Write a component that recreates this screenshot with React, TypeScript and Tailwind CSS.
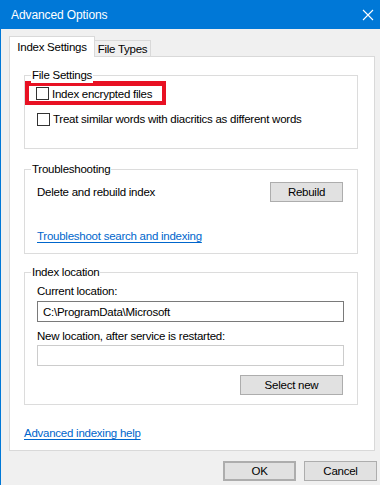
import type { ReactNode } from "react";

const FONT = { fontFamily: '"Segoe UI", "Liberation Sans", Arial, sans-serif' };

export default function App() {
  return (
    <div
      className="w-[380px] h-[485px] bg-[#f0f0f0] border-l border-[#0078d7] text-[11.5px] tracking-[-0.25px] leading-[16px] text-black overflow-hidden whitespace-nowrap"
      style={FONT}
    >
      {/* title bar */}
      <div className="h-[29px] bg-[#0078d7] flex items-center pl-[10px] pr-[6px] text-white">
        <span className="text-[12px] tracking-[-0.1px]">Advanced Options</span>
        <svg className="ml-auto" width="12" height="12" viewBox="0 0 12 12">
          <path d="M1 1 L11 11 M11 1 L1 11" stroke="white" strokeWidth="1.1" />
        </svg>
      </div>

      <div className="pl-[8px] pt-[7px]">
        {/* tabs */}
        <div className="flex items-end h-[20px] relative z-10">
          <div className="h-[21px] w-[86px] bg-white border border-b-0 border-[#d9d9d9] flex items-center justify-center -mb-[1px]">
            Index Settings
          </div>
          <div className="h-[16px] w-[56px] bg-[#f0f0f0] border border-l-0 border-b-0 border-[#d9d9d9] flex items-center justify-center">
            File Types
          </div>
        </div>

        {/* panel */}
        <div className="w-[366px] h-[395px] bg-white border border-[#d9d9d9] px-[14px] pt-[18px]">
          <Group label="File Settings" className="h-[74px]">
            <div className="mt-[5px] w-[141px] h-[24px] border-[4px] border-t-[5px] border-[#e81123] flex items-center pl-[7px] gap-[3px]">
              <Checkbox />
              <span>Index encrypted files</span>
            </div>
            <div className="mt-[6px] flex items-center pl-[12px] gap-[3px]">
              <Checkbox />
              <span>Treat similar words with diacritics as different words</span>
            </div>
          </Group>

          <Group label="Troubleshooting" className="h-[85px] mt-[20px] pl-[12px] pr-[14px] pt-[12px]">
            <div className="flex items-center justify-between">
              <span>Delete and rebuild index</span>
              <Button className="w-[73px]">Rebuild</Button>
            </div>
            <a className="block mt-[26px] text-[#0066cc] underline underline-offset-[2px] w-fit">
              Troubleshoot search and indexing
            </a>
          </Group>

          <Group label="Index location" className="h-[133px] mt-[18px] pl-[12px] pr-[13px] pt-[10px]">
            <div>Current location:</div>
            <div className="mt-[2px] h-[21px] w-[307px] border border-[#7a7a7a] flex items-center pl-[5px]">
              C:\ProgramData\Microsoft
            </div>
            <div className="mt-[6px]">New location, after service is restarted:</div>
            <div className="mt-[1px] h-[21px] w-[307px] border border-[#cccccc]" />
            <div className="mt-[9px] flex justify-end pr-[1px]">
              <Button className="w-[103px]">Select new</Button>
            </div>
          </Group>

          <a className="block mt-[20px] text-[#0066cc] underline underline-offset-[2px] w-fit">
            Advanced indexing help
          </a>
        </div>

        {/* dialog buttons */}
        <div className="flex justify-end gap-[8px] pr-[3px] mt-[10px]">
          <Button className="w-[73px] border-2 border-[#0078d7]">OK</Button>
          <Button className="w-[73px]">Cancel</Button>
        </div>
      </div>
    </div>
  );
}

function Group({ label, className, children }: { label: string; className?: string; children: ReactNode }) {
  return (
    <div className={`relative w-[334px] border border-[#dcdcdc] ${className ?? ""}`}>
      <span className="absolute -top-[9px] left-[6px] px-[1px] bg-white leading-[16px]">{label}</span>
      {children}
    </div>
  );
}

function Checkbox() {
  return <span className="inline-block w-[13px] h-[13px] border border-[#333333] bg-white shrink-0" />;
}

function Button({ className, children }: { className?: string; children: ReactNode }) {
  return (
    <div
      className={`h-[20px] bg-[#e1e1e1] border border-[#adadad] flex items-center justify-center ${className ?? ""}`}
    >
      {children}
    </div>
  );
}
